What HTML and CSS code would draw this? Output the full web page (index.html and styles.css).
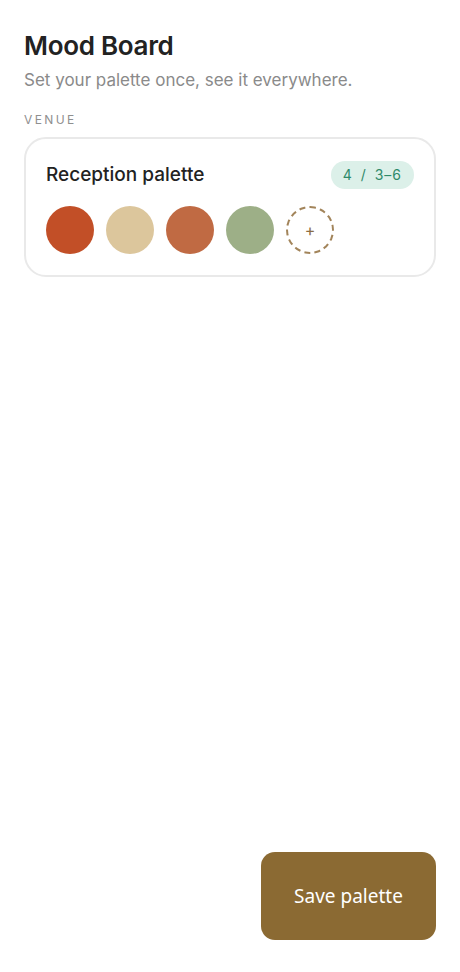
FILE: index.html
```html
<!DOCTYPE html>
<html lang="en">

<head>
  <meta charset="UTF-8" />
  <meta name="viewport" content="width=device-width, initial-scale=1.0" />
  <title>Mood Board</title>
  <link rel="stylesheet" href="styles.css">
</head>

<body>
  <div class="page">
    <h1 class="titulo">Mood Board</h1>
    <p class="sub">Set your palette once, see it everywhere.</p>

    <div class="seccion">VENUE</div>

    <div class="card">
      <div class="card-top">
        <h2>Reception palette</h2>
        <span class="badge">4 / 3–6</span>
      </div>
      <div class="colores">
        <span class="color c1"></span>
        <span class="color c2"></span>
        <span class="color c3"></span>
        <span class="color c4"></span>
        <button class="color agregar">+</button>
      </div>
    </div>

    <button class="guardar">Save palette</button>
  </div>
</body>

</html>
```

FILE: styles.css
```css
* {
  margin: 0px;
  padding: 0px;
  box-sizing: border-box;
}

body {
  font-family: Inter, "Noto Sans", sans-serif;
  background: #ffffff;
  color: #222222;
}

.page {
  min-height: 100vh;
  display: flex;
  flex-direction: column;
  padding: 30px 24px 32px 24px;
}

.titulo {
  font-size: 26px;
  font-weight: 600;
  letter-spacing: -0.3px;
  line-height: 32px;
}

.sub {
  margin-top: 6px;
  font-size: 17px;
  color: #8a8a8a;
  line-height: 24px;
}

.seccion {
  margin-top: 20px;
  font-size: 12px;
  letter-spacing: 2.4px;
  color: #8f8f8f;
  line-height: 16px;
}

.card {
  margin-top: 9px;
  border: 2px solid #e9e9e9;
  border-radius: 22px;
  padding: 22px 20px 21px 20px;
}

.card-top {
  display: flex;
  justify-content: space-between;
  align-items: center;
}

.card-top h2 {
  font-size: 19px;
  font-weight: 500;
  line-height: 28px;
}

.badge {
  background-color: #dcf0e9;
  color: #2f8a6a;
  font-size: 14px;
  letter-spacing: 1px;
  word-spacing: 3px;
  padding: 4px 12px;
  border-radius: 14px;
  line-height: 20px;
}

.colores {
  margin-top: 17px;
  display: flex;
  gap: 12px;
}

.color {
  width: 48px;
  height: 48px;
  border-radius: 50%;
  display: block;
}

.c1 { background-color: #c24f27; }
.c2 { background-color: #dcc69c; }
.c3 { background-color: #c06a43; }
.c4 { background-color: #9daf87; }

.agregar {
  background: none;
  border: 2px dashed #a2845a;
  color: #8a6d45;
  font-size: 16px;
  font-family: inherit;
  cursor: pointer;
}

.guardar {
  margin-top: auto;
  align-self: flex-end;
  width: 175px;
  height: 88px;
  border: none;
  border-radius: 14px;
  background-color: #8b6a33;
  color: #ffffff;
  font-family: "Noto Sans", sans-serif;
  font-size: 19px;
  cursor: pointer;
}
```
